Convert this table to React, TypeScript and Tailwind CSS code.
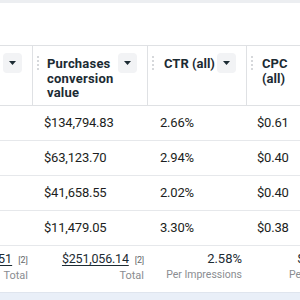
const rows = [
  { value: '$134,794.83', ctr: '2.66%', cpc: '$0.61' },
  { value: '$63,123.70', ctr: '2.94%', cpc: '$0.40' },
  { value: '$41,658.55', ctr: '2.02%', cpc: '$0.40' },
  { value: '$11,479.05', ctr: '3.30%', cpc: '$0.38' },
];

const Handle = () => (
  <div className="flex flex-col gap-[2px] pt-[3px]">
    <span className="w-[2px] h-[2px] rounded-full bg-[#c8cbcf]" />
    <span className="w-[2px] h-[2px] rounded-full bg-[#c8cbcf]" />
    <span className="w-[2px] h-[2px] rounded-full bg-[#c8cbcf]" />
    <span className="w-[2px] h-[2px] rounded-full bg-[#c8cbcf]" />
  </div>
);

const SortButton = () => (
  <div className="w-[19px] h-[20px] rounded-[4px] bg-[#f2f3f5] flex items-center justify-center shrink-0">
    <svg width="7" height="4" viewBox="0 0 7 4">
      <path d="M0 0h7L3.5 4z" fill="#1c2b33" />
    </svg>
  </div>
);

const App = () => {
  return (
    <div className="w-[300px] h-[300px] overflow-hidden bg-white text-[#1c2b33] font-['Roboto','Liberation_Sans',sans-serif]">
      <div className="h-[3px] bg-[#eceef1]" />
      <div className="h-[42px]" />

      <div className="w-max -ml-[87px]">
        {/* header */}
        <div className="flex h-[61px] border-y border-[#dfe1e4] text-[13px] font-bold leading-[14.5px]">
          <div className="w-[120px] flex justify-end pt-[7px] pr-[10px] border-r border-[#dfe1e4]">
            <SortButton />
          </div>
          <div className="w-[115px] flex items-start pt-[7px] pl-[4px] pr-[10px] border-r border-[#dfe1e4]">
            <Handle />
            <div className="ml-[8px] pt-[4px] flex-1 tracking-[0.2px]">
              Purchases
              <br />
              conversion
              <br />
              value
            </div>
            <SortButton />
          </div>
          <div className="w-[99px] flex items-start pt-[7px] pl-[4px] pr-[10px] border-r border-[#dfe1e4]">
            <Handle />
            <div className="ml-[10px] pt-[4px] flex-1 whitespace-nowrap">CTR (all)</div>
            <SortButton />
          </div>
          <div className="w-[88px] flex items-start pt-[7px] pl-[4px] pr-[10px]">
            <Handle />
            <div className="ml-[9px] pt-[4px] flex-1">
              CPC
              <br />
              (all)
            </div>
            <SortButton />
          </div>
        </div>

        {/* data rows */}
        {rows.map((row, index) => (
          <div key={index} className="flex h-[35px] items-center border-b border-[#e6e8eb] text-[13px] tracking-[-0.2px] text-[#1c1e21]">
            <div className="w-[120px]" />
            <div className="w-[115px] pl-[11px]">{row.value}</div>
            <div className="w-[99px] pl-[12px]">{row.ctr}</div>
            <div className="w-[88px] pl-[10px]">{row.cpc}</div>
          </div>
        ))}

        {/* totals */}
        <div className="flex h-[46px]">
          <div className="w-[120px] flex flex-col items-end pr-[5px] pt-[5px]">
            <div className="flex items-baseline gap-[6px] text-[12.5px] leading-[16px]">
              <span className="underline decoration-[#1c2b33] underline-offset-2">97,551</span>
              <span className="text-[9px] text-[#65676b]">[2]</span>
            </div>
            <span className="text-[11px] text-[#8a8d91] leading-[16px]">Total</span>
          </div>
          <div className="w-[115px] flex flex-col items-end pr-[4px] pt-[5px]">
            <div className="flex items-baseline gap-[6px] text-[12.5px] leading-[16px] tracking-[-0.2px]">
              <span className="underline decoration-[#1c2b33] underline-offset-2">$251,056.14</span>
              <span className="text-[9px] text-[#65676b]">[2]</span>
            </div>
            <span className="text-[11px] text-[#8a8d91] leading-[16px]">Total</span>
          </div>
          <div className="w-[99px] flex flex-col items-end pr-[5px] pt-[5px]">
            <span className="text-[13px] leading-[16px]">2.58%</span>
            <span className="text-[10.5px] text-[#8a8d91] leading-[16px]">Per Impressions</span>
          </div>
          <div className="w-[88px] flex flex-col items-end pr-[5px] pt-[5px]">
            <span className="text-[13px] leading-[16px]">$0.45</span>
            <span className="text-[10.5px] text-[#8a8d91] leading-[16px]">Per Click</span>
          </div>
        </div>
      </div>

      <div className="h-[20px] border-t border-[#dfe5ee] bg-[#e9eff8]" />
    </div>
  );
};

export default App;
